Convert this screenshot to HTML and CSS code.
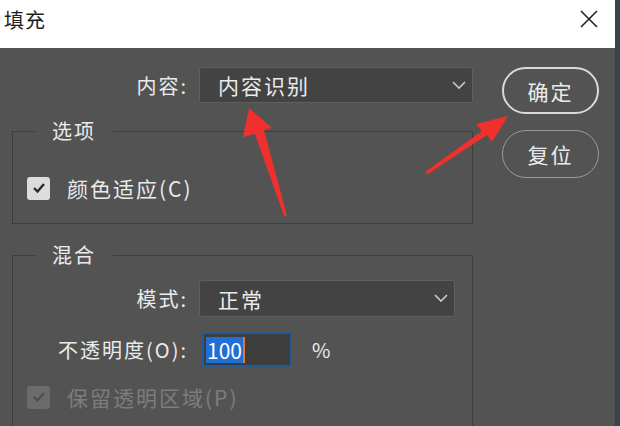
FILE: index.html
```html
<!DOCTYPE html>
<html lang="zh-CN">
<head>
    <meta charset="UTF-8">
    <meta name="viewport" content="width=device-width, initial-scale=1.0">
    <title>填充</title>
    <link rel="stylesheet" href="styles.css">
</head>
<body>
    <div class="tela">
        <div class="dialogo">
            <div class="titulo">
                <span class="titulo-texto">填充</span>
                <svg class="fechar" width="18" height="18" viewBox="0 0 18 18">
                    <path d="M1 1 L17 17 M17 1 L1 17" stroke="#222" stroke-width="1.6" fill="none"/>
                </svg>
            </div>

            <div class="corpo">
                <div class="coluna">
                    <div class="linha">
                        <span class="rotulo">内容:</span>
                        <div class="seletor largo">
                            <span>内容识别</span>
                            <svg width="14" height="9" viewBox="0 0 14 9"><path d="M1 1 L7 7 L13 1" stroke="#c8c8c8" stroke-width="1.6" fill="none"/></svg>
                        </div>
                    </div>

                    <fieldset class="grupo opcoes">
                        <legend>选项</legend>
                        <div class="marcar">
                            <span class="caixa">
                                <svg width="14" height="12" viewBox="0 0 14 12"><path d="M2 6 L5.5 9.5 L12 2" stroke="#2a2a2a" stroke-width="2.4" fill="none"/></svg>
                            </span>
                            <span>颜色适应(C)</span>
                        </div>
                    </fieldset>

                    <fieldset class="grupo mistura">
                        <legend>混合</legend>
                        <div class="linha">
                            <span class="rotulo">模式:</span>
                            <div class="seletor medio">
                                <span>正常</span>
                                <svg width="14" height="9" viewBox="0 0 14 9"><path d="M1 1 L7 7 L13 1" stroke="#c8c8c8" stroke-width="1.6" fill="none"/></svg>
                            </div>
                        </div>
                        <div class="linha opacidade">
                            <span class="rotulo">不透明度(O):</span>
                            <div class="entrada"><span class="selecao">100</span></div>
                            <span class="porcento">%</span>
                        </div>
                        <div class="marcar desligado">
                            <span class="caixa">
                                <svg width="14" height="12" viewBox="0 0 14 12"><path d="M2 6 L5.5 9.5 L12 2" stroke="#4c4c4c" stroke-width="2" fill="none"/></svg>
                            </span>
                            <span>保留透明区域(P)</span>
                        </div>
                    </fieldset>
                </div>

                <div class="botoes">
                    <div class="botao principal">确定</div>
                    <div class="botao">复位</div>
                </div>
            </div>

            <!-- setas vermelhas desenhadas por cima do diálogo -->
            <svg class="setas" width="615" height="426" viewBox="0 0 615 426">
                <polygon fill="#f0302c" points="249,108 272,128 264,130 287,216 284,216 255,134 243,137"/>
                <polygon fill="#f0302c" points="508,116 492,142 487,135 428,174 425,172 482,131 476,124"/>
            </svg>
        </div>
        <div class="borda"></div>
    </div>
</body>
</html>
```

FILE: styles.css
```css
body {
    margin: 0;
    font-family: "Noto Sans CJK SC", "Noto Sans", sans-serif;
    background-color: #535353;
}
.tela {
    display: flex;
    width: 620px;
    height: 426px;
    overflow: hidden;
}
.dialogo {
    position: relative;
    width: 615px;
    background-color: #535353;
    color: #ebebeb;
}
.borda {
    flex: 1;
    background-color: #39444a;
}
.titulo {
    display: flex;
    align-items: center;
    justify-content: space-between;
    height: 48px;
    padding: 0 17px 0 4px;
    background-color: #fff;
    color: #1e1e1e;
}
.titulo-texto {
    font-size: 20px;
    letter-spacing: 1px;
    margin-top: -9px;
}
.fechar {
    margin-top: -10px;
}
.corpo {
    display: flex;
    padding: 19px 0 0 12px;
}
.coluna {
    width: 461px;
}
.linha {
    display: flex;
    align-items: center;
}
.rotulo {
    width: 187px;
    flex-shrink: 0;
    padding-right: 11px;
    box-sizing: border-box;
    text-align: right;
    font-size: 20px;
    letter-spacing: 2px;
    white-space: nowrap;
}
.seletor {
    display: flex;
    align-items: center;
    justify-content: space-between;
    height: 36px;
    box-sizing: border-box;
    padding: 0 6px 0 18px;
    background-color: #434343;
    border: 1px solid #5f5f5f;
    border-radius: 3px;
    font-size: 21px;
    letter-spacing: 2px;
}
.largo {
    width: 274px;
}
.medio {
    width: 256px;
    height: 37px;
}
.grupo {
    margin: 0;
    padding: 0;
    border: 1px solid #3d3d3d;
    min-width: 0;
}
.grupo legend {
    margin-left: 22px;
    padding: 0 17px;
    font-size: 20px;
    letter-spacing: 2px;
    line-height: 24px;
}
.opcoes {
    margin-top: 16px;
    padding: 30px 14px 20px;
}
.opcoes legend {
    margin-left: 8px;
}
.mistura {
    margin-top: 19px;
    height: 200px;
    padding-top: 13px;
}
.mistura .rotulo {
    width: 186px;
}
.marcar {
    display: flex;
    align-items: center;
    gap: 17px;
    font-size: 21px;
    letter-spacing: 2px;
}
.caixa {
    display: flex;
    align-items: center;
    justify-content: center;
    width: 23px;
    height: 23px;
    flex-shrink: 0;
    border-radius: 3px;
    background-color: #dcdcdc;
}
.opacidade {
    margin-top: 15px;
}
.entrada {
    display: flex;
    align-items: center;
    width: 90px;
    height: 35px;
    box-sizing: border-box;
    margin-left: 3px;
    padding-left: 2px;
    border: 2px solid #245b93;
    background-color: #3d3d3d;
}
.selecao {
    background-color: #1f6fd6;
    color: #fff;
    font-size: 21px;
    line-height: 26px;
    padding: 0 1px;
    border-right: 2px solid #e0783a;
}
.porcento {
    margin-left: 20px;
    font-size: 20px;
}
.desligado {
    margin-top: 15px;
    margin-left: 14px;
    color: #7d7d7d;
}
.desligado .caixa {
    background-color: #6b6b6b;
}
.botoes {
    display: flex;
    flex-direction: column;
    gap: 16px;
    margin-left: 29px;
}
.botao {
    display: flex;
    align-items: center;
    justify-content: center;
    width: 97px;
    height: 48px;
    box-sizing: border-box;
    border: 1px solid #9a9a9a;
    border-radius: 24px;
    font-size: 21px;
    letter-spacing: 2px;
}
.principal {
    height: 47px;
    border: 2px solid #dadada;
}
.setas {
    position: absolute;
    left: 0;
    top: 0;
    pointer-events: none;
}
```
